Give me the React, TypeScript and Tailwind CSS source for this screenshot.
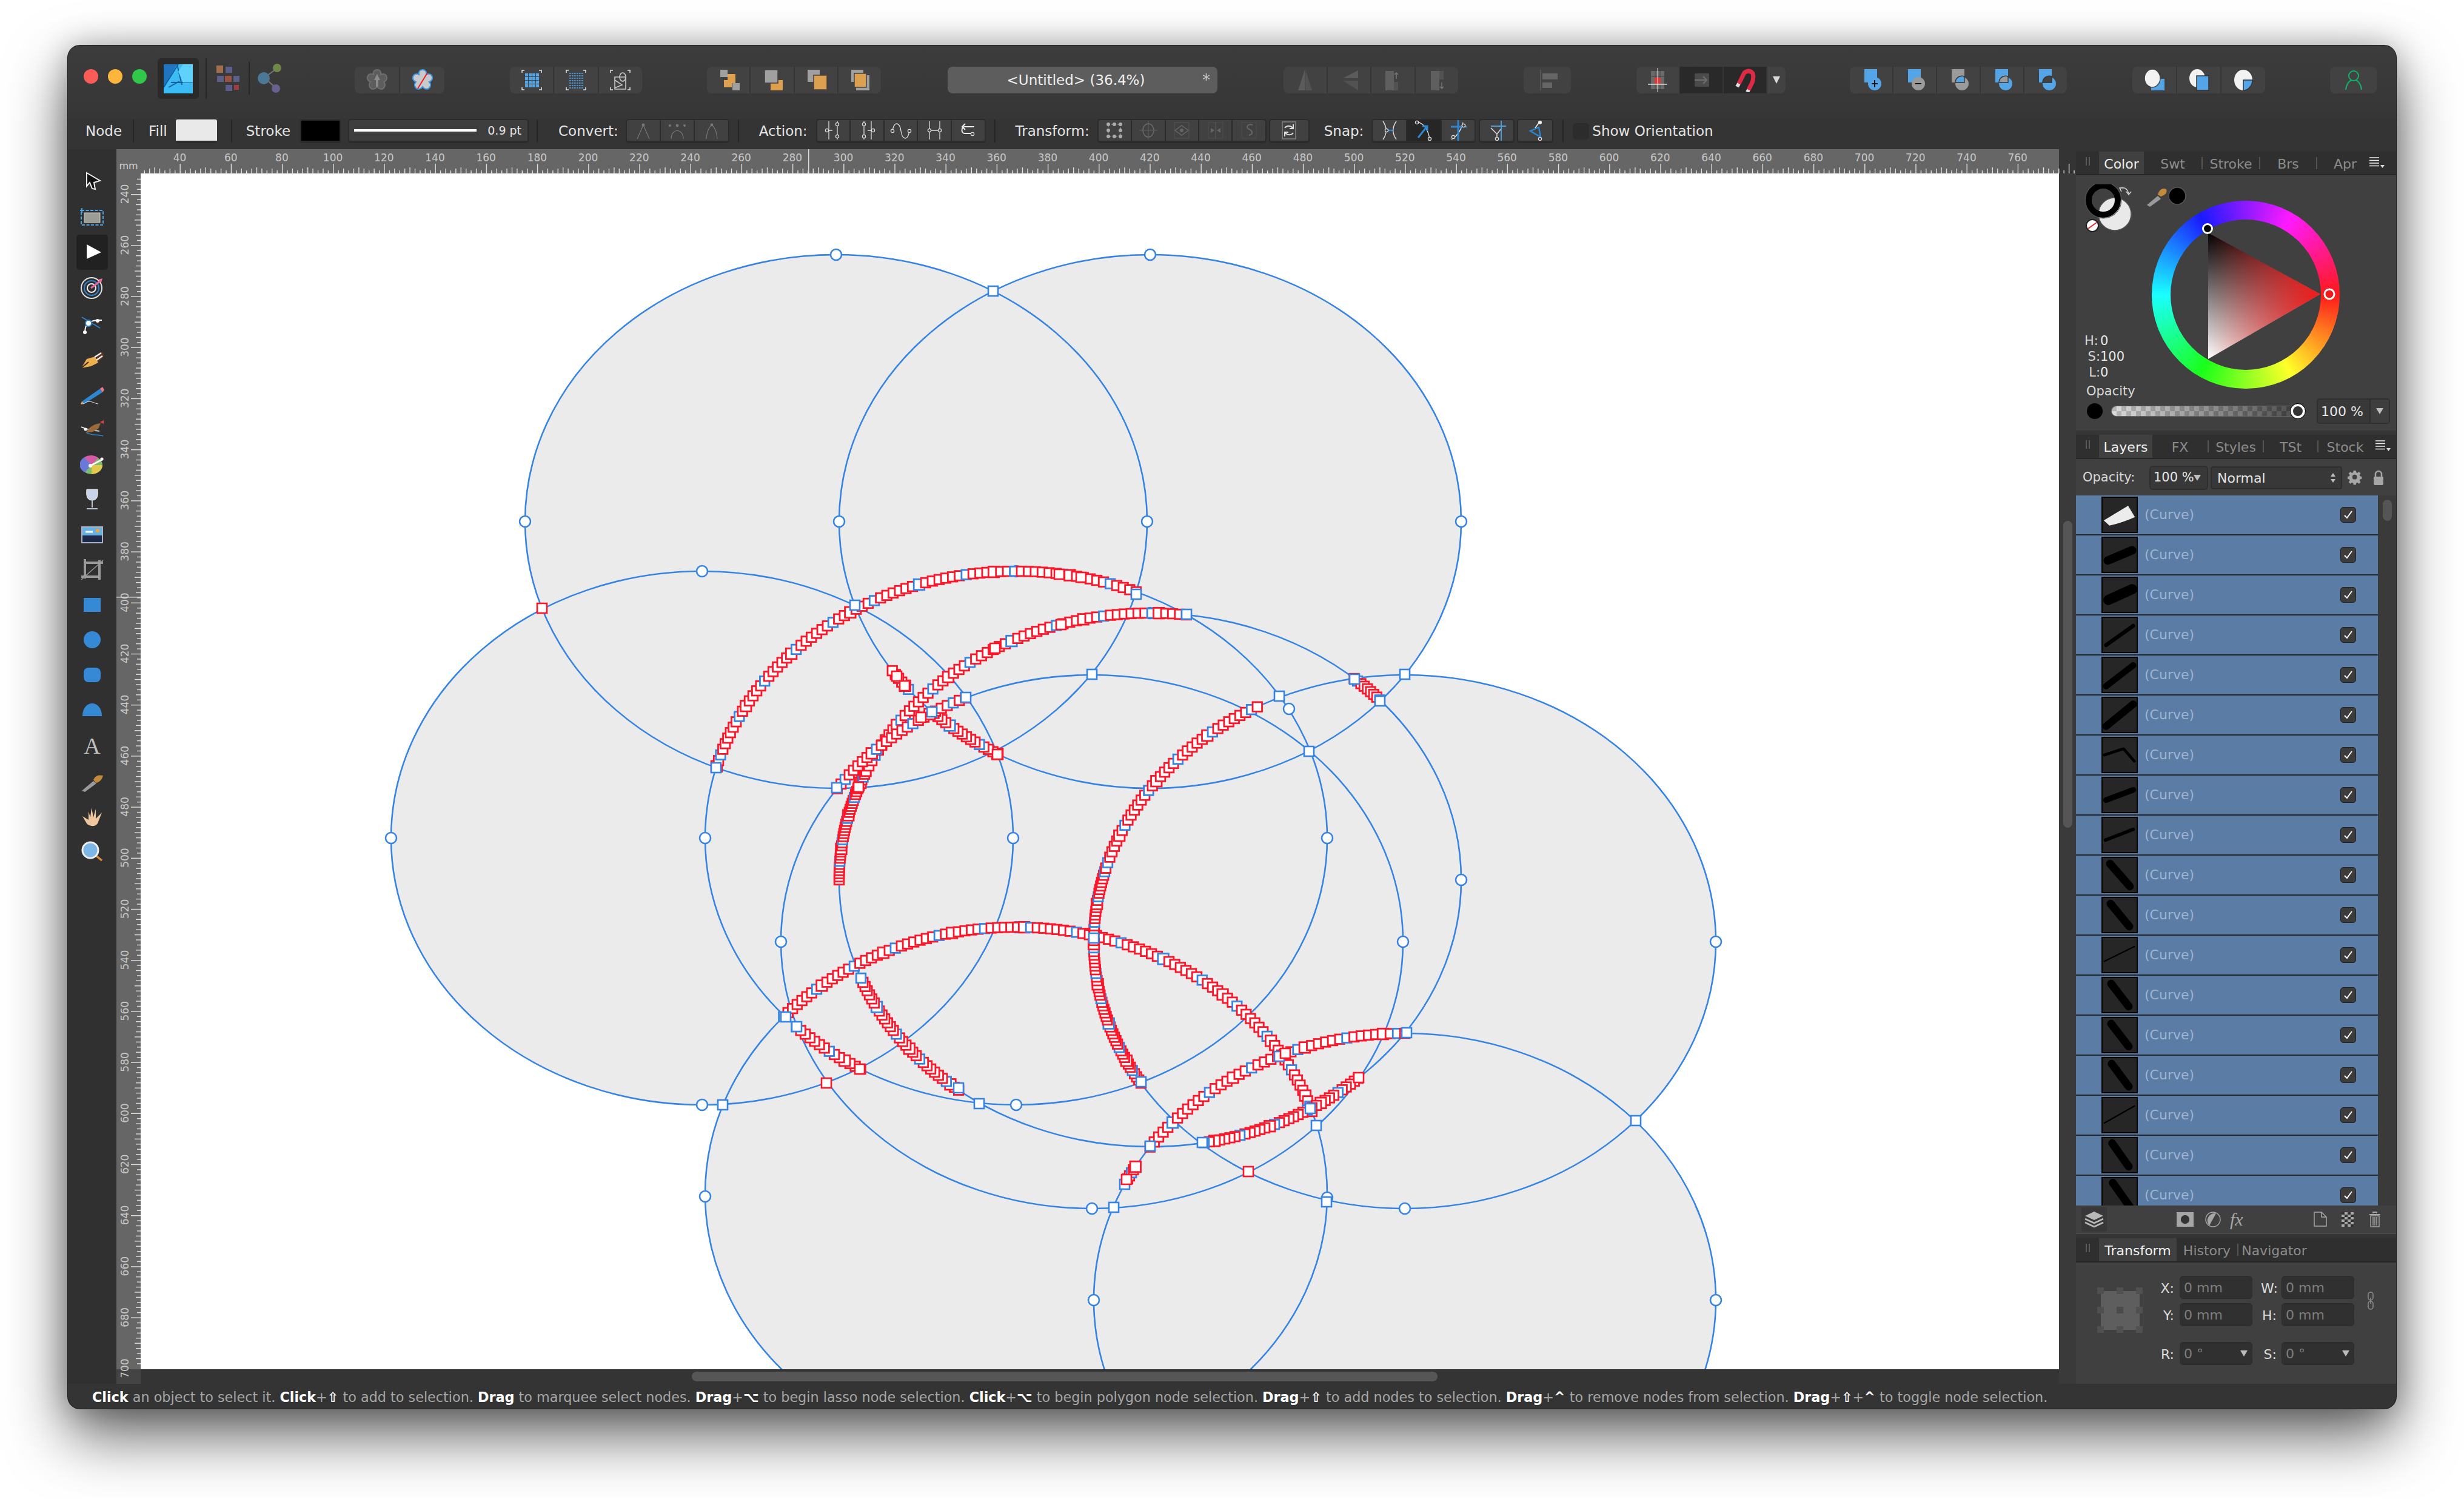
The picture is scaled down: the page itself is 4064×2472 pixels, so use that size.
import React from "react";

const FONT = "font-['DejaVu_Sans',sans-serif]";

/* ---------- canvas geometry (page px) ---------- */
const RX = 513;
const RY = 440;
const centers: Record<string, [number, number]> = {
  A: [1379, 860],
  B: [1897, 860],
  C: [1158, 1382],
  D: [1676, 1382],
  E: [1801, 1553],
  F: [2317, 1553],
  G: [1897, 1451],
  H: [1676, 1969],
  I: [2317, 2144],
};

type Chain = [string, number, number, number];
const chains: Chain[] = [
  ["D", 195.6, 292.7, 10.5],
  ["G", 180, 204, 5.5],
  ["G", 204, 276.7, 10.5],
  ["H", 221.6, 342, 10],
  ["F", 148, 196, 6.5],
  ["F", 196, 241.7, 10],
  ["I", 215, 270, 11],
  ["I", 207, 210, 7],
  ["D", 120, 135, 9.5],
  ["G", 128, 158.4, 8],
  ["B", 141, 146, 9],
  ["B", 119.4, 134, 8],
  ["G", 311, 317.6, 7],
  ["G", 48, 80, 8],
  ["E", 215, 246, 10],
];

const chainSquares = chains.flatMap(([c, t0, t1, step], ci) => {
  const [cx, cy] = centers[c];
  const n = Math.round(((t1 - t0) * 8.2) / step);
  return Array.from({ length: n + 1 }, (_, i) => {
    const t = ((t0 + ((t1 - t0) * i) / Math.max(n, 1)) * Math.PI) / 180;
    return {
      key: `${ci}-${i}`,
      x: cx + RX * Math.cos(t),
      y: cy + RY * Math.sin(t),
      blue: (i * 5 + ci) % 7 === 3,
      big: (i + ci) % 11 === 0,
    };
  });
});

const blueNodes: [number, number][] = [
  [1410, 998], [1181, 1266], [1380, 1299], [1593, 1150], [1537, 1174], [1638, 480], [1874, 980], [1957, 1013],
  [2110, 1148], [2159, 1239], [2234, 1120], [2276, 1156], [2317, 1112], [1801, 1112], [1296, 1677], [1314, 1693],
  [1192, 1822], [1581, 1794], [1615, 1820], [1804, 1547], [2110, 1742], [2161, 1828], [2171, 1856], [1882, 1784],
  [1897, 1890], [1983, 1884], [2188, 1982], [1837, 1991], [1855, 1953], [2698, 1848], [2320, 1703],
];
const redNodes: [number, number][] = [
  [1416, 1298], [1519, 1183], [1645, 1244], [1479, 1115], [1492, 1131], [1641, 1069], [1750, 1030], [1747, 947],
  [1783, 952], [894, 1003], [1418, 1763], [1363, 1786], [2120, 1737], [2241, 1777], [2059, 1932], [1858, 1945],
];
const circleNodes: [number, number][] = [
  [1379, 420], [1897, 420], [866, 860], [1384, 860], [1892, 860], [2410, 860],
  [1158, 942], [1676, 942], [645, 1382], [1163, 1382], [1671, 1382], [2189, 1382], [1158, 1822], [1676, 1822],
  [1288, 1553], [2314, 1553], [2830, 1553], [1801, 1993], [2317, 1993], [1897, 1011], [1676, 1529],
  [2126, 1169], [2410, 1451], [1163, 1973], [2189, 1975], [1804, 2144], [2830, 2144],
];

const Canvas = () => (
  <svg viewBox="232 286 3164 1972" className="block w-[3164px] h-[1972px] bg-white">
    {Object.values(centers).map(([cx, cy], i) => (
      <ellipse key={i} cx={cx} cy={cy} rx={RX} ry={RY} fill="#ebebeb" />
    ))}
    {Object.values(centers).map(([cx, cy], i) => (
      <ellipse key={i} cx={cx} cy={cy} rx={RX} ry={RY} fill="none" stroke="#3584e4" strokeWidth="2.6" />
    ))}
    {circleNodes.map(([x, y], i) => (
      <ellipse key={i} cx={x} cy={y} rx={9} ry={9} fill="#fff" stroke="#3584e4" strokeWidth="2.6" />
    ))}
    {chainSquares.map((s) => {
      const d = s.big ? 17.5 : 15.5;
      return (
        <rect
          key={s.key}
          x={s.x - d / 2}
          y={s.y - d / 2}
          width={d}
          height={d}
          fill="#fff"
          stroke={s.blue ? "#3584e4" : "#ff1428"}
          strokeWidth="2.8"
        />
      );
    })}
    {blueNodes.map(([x, y], i) => (
      <rect key={i} x={x - 8} y={y - 8} width={16} height={16} fill="#fff" stroke="#3584e4" strokeWidth="2.6" />
    ))}
    {redNodes.map(([x, y], i) => (
      <rect key={i} x={x - 8} y={y - 8} width={16} height={16} fill="#fff" stroke="#ff1428" strokeWidth="2.6" />
    ))}
  </svg>
);

/* ---------- rulers ---------- */
const RulerTop = () => {
  const ticks = Array.from({ length: 385 }, (_, i) => i * 2 + 20);
  const labels = Array.from({ length: 37 }, (_, i) => 40 + i * 20);
  return (
    <svg viewBox="232 246 3192 40" className="block w-[3192px] h-[40px]">
      <rect x="232" y="246" width="3164" height="40" fill="#666" />
      {ticks.map((v) => {
        const x = 296.5 + (v - 40) * 4.21;
        if (x < 236 || x > 3424) return null;
        const h = v % 20 === 0 ? 16 : v % 10 === 0 ? 10 : v % 4 === 0 ? 8 : 5;
        return <rect key={v} x={x} y={286 - h} width="1.4" height={h} fill="#ddd" />;
      })}
      {labels.map((v) => (
        <text key={v} x={296.5 + (v - 40) * 4.21} y="266" fontSize="17" fill="#c8c8c8" textAnchor="middle" fontFamily="DejaVu Sans">
          {v}
        </text>
      ))}
      <rect x="1333" y="246" width="1.5" height="40" fill="#ddd" />
    </svg>
  );
};

const RulerLeft = () => {
  const ticks = Array.from({ length: 240 }, (_, i) => i * 2 + 220);
  const labels = Array.from({ length: 24 }, (_, i) => 240 + i * 20);
  return (
    <svg viewBox="192 286 40 1996" className="block w-[40px] h-[1996px]">
      <rect x="192" y="286" width="40" height="1972" fill="#666" />
      <rect x="192" y="2258" width="40" height="24" fill="#444" />
      {ticks.map((v) => {
        const y = 320 + (v - 240) * 4.21;
        if (y < 288 || y > 2282) return null;
        const w = v % 20 === 0 ? 16 : v % 10 === 0 ? 10 : v % 4 === 0 ? 8 : 6;
        return <rect key={v} x={232 - w} y={y} width={w} height="1.4" fill="#ddd" />;
      })}
      {labels.map((v) => {
        const y = 320 + (v - 240) * 4.21;
        return (
          <text key={v} x="206" y={y} fontSize="17" fill="#c8c8c8" textAnchor="middle" fontFamily="DejaVu Sans" transform={`rotate(-90 206 ${y}) translate(0 6)`}>
            {v}
          </text>
        );
      })}
      <rect x="192" y="984" width="40" height="1.5" fill="#ddd" />
    </svg>
  );
};

/* ---------- small helpers ---------- */
const Ico = ({ children, w = 40, h = 40 }: { children: React.ReactNode; w?: number; h?: number }) => (
  <svg width={w} height={h} viewBox={`0 0 ${w} ${h}`} className="block shrink-0">
    {children}
  </svg>
);

const Group = ({ className, items, cellClass }: { className: string; items: React.ReactNode[]; cellClass?: (i: number) => string }) => (
  <div className={`flex h-[44px] shrink-0 overflow-hidden rounded-[8px] bg-[#424242] ${className}`}>
    {items.map((it, i) => (
      <div key={i} className={`flex min-w-0 flex-1 items-center justify-center ${i > 0 ? "border-l-2 border-[#353535]" : ""} ${cellClass ? cellClass(i) : ""}`}>
        {it}
      </div>
    ))}
  </div>
);

const Well = ({ className, items, cellClass }: { className: string; items: React.ReactNode[]; cellClass?: (i: number) => string }) => (
  <div className={`flex h-[40px] shrink-0 overflow-hidden rounded-[5px] border-2 border-b-4 border-[#2b2b2b] bg-[#414141] ${className}`}>
    {items.map((it, i) => (
      <div key={i} className={`flex min-w-0 flex-1 items-center justify-center ${i > 0 ? "border-l-2 border-[#2b2b2b]" : ""} ${cellClass ? cellClass(i) : ""}`}>
        {it}
      </div>
    ))}
  </div>
);

const Sep = ({ className = "" }: { className?: string }) => <div className={`h-[38px] w-[2px] shrink-0 bg-[#262626] ${className}`} />;
const Label = ({ children, className = "" }: { children: React.ReactNode; className?: string }) => (
  <span className={`shrink-0 text-[23px] leading-none whitespace-nowrap text-[#e4e4e4] ${className}`}>{children}</span>
);

const Flower = ({ fill, stroke }: { fill: string; stroke: string }) => (
  <g fill={fill} stroke={stroke} strokeWidth="2">
    <path d="M20 3c5 0 7 4 6 8 4-2 9-1 10 4 1 4-2 7-5 8 3 3 3 8-1 11-4 2-8 0-10-3-2 3-6 5-10 3-4-3-4-8-1-11-3-1-6-4-5-8 1-5 6-6 10-4-1-4 1-8 6-8z" />
  </g>
);

/* node-type glyphs in the context bar */
const N = ({ x, y }: { x: number; y: number }) => <circle cx={x} cy={y} r="2.6" fill="#3c3c3c" stroke="#ddd" strokeWidth="1.3" />;

/* ---------- title toolbar ---------- */
const TopBar = () => (
  <div className="flex h-[121px] shrink-0 items-start bg-[linear-gradient(#3c3c3c,#363636)] pt-[35px] pl-[26px]">
    <div className="mt-[4px] flex gap-[16px]">
      <div className="h-[24px] w-[24px] rounded-full bg-[#fc5c57]" />
      <div className="h-[24px] w-[24px] rounded-full bg-[#fdb63b]" />
      <div className="h-[24px] w-[24px] rounded-full bg-[#31c748]" />
    </div>
    <div className="mt-[-14px] ml-[18px] flex h-[67px] w-[68px] shrink-0 items-center justify-center rounded-[6px] bg-[#2a2a2a]">
      <svg width="48" height="48" viewBox="0 0 48 48" className="block">
        <rect width="48" height="48" fill="#3bbcf4" />
        <path d="M0 0h22L0 38z" fill="#1f75c0" />
        <path d="M0 38L24 0M22 0l8 34M12 30h36M8 38l18-10" stroke="#135f9c" strokeWidth="2" fill="none" />
        <path d="M24 12l8-12h16v30H32z" fill="#5ed2fb" />
      </svg>
    </div>
    <div className="mt-[-14px] ml-[11px] h-[67px] w-[2px] bg-[#262626]" />
    <div className="mt-[-2px] ml-[16px]">
      <Ico w={40} h={46}>
        <rect x="0" y="0" width="11" height="12" fill="#a06e4e" />
        <rect x="15" y="2" width="11" height="10" fill="#5b5f8a" />
        <rect x="1" y="17" width="11" height="10" fill="#5b5f8a" />
        <rect x="14" y="17" width="11" height="10" fill="#9c5242" />
        <rect x="28" y="17" width="10" height="10" fill="#5b5f8a" />
        <rect x="15" y="32" width="11" height="10" fill="#5b5f8a" />
        <rect x="29" y="32" width="8" height="8" fill="#9c3f44" />
      </Ico>
    </div>
    <div className="mt-[-8px] ml-[13px] h-[54px] w-[2px] bg-[#262626]" />
    <div className="mt-[-6px] ml-[12px]">
      <Ico w={42} h={50}>
        <path d="M12 24L34 8M12 24L32 42" stroke="#777" strokeWidth="2" />
        <circle cx="11" cy="25" r="10" fill="#4c7896" />
        <circle cx="33" cy="8" r="7" fill="#6f8848" />
        <circle cx="31" cy="42" r="7" fill="#68608f" />
      </Ico>
    </div>

    <Group
      className="ml-[119px] w-[148px]"
      items={[
        <Ico key="a">
          <Flower fill="#5d5d5d" stroke="#6e6e6e" />
          <path d="M20 10l5 10h-3v11h-4V20h-3z" fill="#8c8c8c" />
        </Ico>,
        <Ico key="b">
          <Flower fill="#c9c9c9" stroke="#3d97e2" />
          <path d="M12 34L28 8" stroke="#e5262c" strokeWidth="2" />
        </Ico>,
      ]}
    />
    <Group
      className="ml-[108px] w-[218px]"
      items={[
        <Ico key="a">
          <path d="M4 8V4h4M32 4h4v4M36 32v4h-4M8 36H4v-4" stroke="#ddd" strokeWidth="1.6" fill="none" />
          {[10, 16, 22, 28].map((y) => [11, 17, 23, 29].map((x) => <rect key={`${x}${y}`} x={x - 2} y={y - 1} width="5" height="5" fill="#54a5e5" />))}
        </Ico>,
        <Ico key="b">
          <path d="M4 8V4h4M32 4h4v4M36 32v4h-4M8 36H4v-4" stroke="#ddd" strokeWidth="1.6" fill="none" />
          {[8, 12, 16, 20, 24, 28, 32].map((y) => [9, 13, 17, 21, 25, 29].map((x) => <rect key={`${x}${y}`} x={x} y={y} width="2.6" height="2" fill="#4a93cf" />))}
        </Ico>,
        <Ico key="c">
          <path d="M4 8V4h4M32 4h4v4M36 32v4h-4M8 36H4v-4" stroke="#ddd" strokeWidth="1.6" fill="none" />
          <path d="M11 15h18v20H11zM11 20l12 8-12 5M24 8a5 7 0 1 0 .1 0" stroke="#c8c8c8" strokeWidth="1.6" fill="none" />
        </Ico>,
      ]}
    />
    <Group
      className="ml-[107px] w-[287px]"
      items={[
        <Ico key="a">
          <rect x="7" y="3" width="12" height="12" fill="#a0a0a0" />
          <rect x="19" y="10" width="13" height="15" fill="#dca04f" />
          <rect x="13" y="20" width="13" height="12" fill="#dca04f" />
          <rect x="27" y="25" width="12" height="12" fill="#a0a0a0" />
        </Ico>,
        <Ico key="b">
          <path d="M18 20h20v17H18z" fill="#dca04f" />
          <rect x="8" y="3" width="22" height="22" fill="#a0a0a0" stroke="#424242" strokeWidth="1.5" />
        </Ico>,
        <Ico key="c">
          <rect x="6" y="3" width="20" height="20" fill="#a0a0a0" />
          <rect x="16" y="12" width="22" height="24" fill="#dca04f" stroke="#424242" strokeWidth="1.5" />
        </Ico>,
        <Ico key="d">
          <rect x="6" y="3" width="20" height="20" fill="#a0a0a0" />
          <rect x="14" y="27" width="22" height="10" fill="#a0a0a0" />
          <rect x="30" y="12" width="6" height="24" fill="#a0a0a0" />
          <rect x="11" y="9" width="20" height="23" fill="#dca04f" stroke="#424242" strokeWidth="1.5" />
        </Ico>,
      ]}
    />
    <div className="relative ml-[110px] flex h-[44px] w-[445px] shrink-0 items-center justify-center rounded-[8px] bg-[#5d5d5d] pr-[22px] text-[23px] text-[#f0f0f0]">
      &lt;Untitled&gt; (36.4%)
      <span className="absolute right-[12px] text-[26px] leading-none text-[#c8c8c8]">*</span>
    </div>
    <Group
      className="ml-[109px] w-[288px]"
      items={[
        <Ico key="a">
          <path d="M20 3L9 37h11z" fill="#5b5b5b" />
          <path d="M21 3l11 34H21z" fill="#525252" />
        </Ico>,
        <Ico key="b">
          <path d="M35 4L10 17h25z" fill="#5b5b5b" />
          <path d="M35 37L10 21h25z" fill="#525252" />
        </Ico>,
        <Ico key="c">
          <rect x="8" y="5" width="14" height="32" fill="#5f5f5f" />
          <rect x="22" y="23" width="7" height="14" fill="#525252" />
          <path d="M26 18V8m-3 3l3-3 3 3" stroke="#777" strokeWidth="1.5" fill="none" />
        </Ico>,
        <Ico key="d">
          <rect x="10" y="5" width="14" height="32" fill="#5f5f5f" />
          <rect x="24" y="5" width="7" height="14" fill="#525252" />
          <path d="M28 24v10m-3-3l3 3 3-3" stroke="#777" strokeWidth="1.5" fill="none" />
        </Ico>,
      ]}
    />
    <Group
      className="ml-[108px] w-[78px]"
      items={[
        <Ico key="a">
          <rect x="8" y="3" width="1.5" height="34" fill="#5a5a5a" />
          <rect x="12" y="9" width="25" height="10" fill="#666" />
          <rect x="12" y="24" width="16" height="9" fill="#666" />
        </Ico>,
      ]}
    />
    <Group
      className="ml-[108px] w-[246px]"
      cellClass={(i) => (i === 1 || i === 2 ? "bg-[#292929]" : i === 3 ? "max-w-[32px]" : "")}
      items={[
        <Ico key="a">
          <rect x="9" y="5" width="22" height="30" fill="#6a6a6a" />
          <path d="M16 5v30M24 5v30M9 14h22" stroke="#424242" strokeWidth="1" />
          <rect x="15" y="16" width="10" height="10" fill="#e2383a" />
          <path d="M20 0v44" stroke="#ddd" strokeWidth="1" />
          <path d="M4 27h32" stroke="#ddd" strokeWidth="1.5" />
        </Ico>,
        <Ico key="b">
          <rect x="9" y="9" width="24" height="22" fill="#4a4a4a" />
          <path d="M9 20h19m-5-6l6 6-6 6" stroke="#6c6c6c" strokeWidth="2.4" fill="none" />
        </Ico>,
        <Ico key="c">
          <path d="M10 26L19 8q8-6 14 1 2 7-1 15l-6 12" stroke="#dd2a45" strokeWidth="7" fill="none" />
          <path d="M10 26l-3 5M26 36l-2 4" stroke="#ddd" strokeWidth="6" />
        </Ico>,
        <svg key="d" width="14" height="14" viewBox="0 0 14 14" className="block">
          <path d="M1 1h12L7 13z" fill="#d8d8d8" />
        </svg>,
      ]}
    />
    <Group
      className="ml-[106px] w-[358px]"
      items={[
        <Ico key="a">
          <rect x="9" y="2" width="21" height="22" fill="#53a5e8" />
          <circle cx="26" cy="26" r="11" fill="#53a5e8" />
          <path d="M26 20v12M21 26h10" stroke="#111" strokeWidth="2" />
        </Ico>,
        <Ico key="b">
          <rect x="9" y="2" width="21" height="22" fill="#53a5e8" />
          <circle cx="26" cy="26" r="11" fill="#9a9a9a" />
          <path d="M21 26h10" stroke="#111" strokeWidth="2" />
        </Ico>,
        <Ico key="c">
          <rect x="9" y="2" width="21" height="22" fill="#9a9a9a" />
          <circle cx="26" cy="26" r="11" fill="#9a9a9a" />
          <path d="M15 24a11 11 0 0 1 15-10v10z" fill="#53a5e8" stroke="#333" strokeWidth="1.4" />
        </Ico>,
        <Ico key="d">
          <rect x="9" y="2" width="21" height="22" fill="#53a5e8" />
          <circle cx="26" cy="26" r="11" fill="#53a5e8" />
          <path d="M15 24a11 11 0 0 1 15-10v10z" fill="#9a9a9a" stroke="#333" strokeWidth="1.4" />
        </Ico>,
        <Ico key="e">
          <rect x="9" y="2" width="21" height="22" fill="#53a5e8" />
          <circle cx="26" cy="26" r="11" fill="#53a5e8" />
          <path d="M15 24a11 11 0 0 1 15-10v10z" fill="#424242" stroke="#333" strokeWidth="1.4" />
        </Ico>,
      ]}
    />
    <Group
      className="ml-[108px] w-[219px]"
      items={[
        <Ico key="a">
          <rect x="15" y="18" width="22" height="19" fill="#53a5e8" />
          <ellipse cx="17" cy="17" rx="13" ry="15" fill="#f2f2f2" stroke="#424242" strokeWidth="1.5" />
        </Ico>,
        <Ico key="b">
          <ellipse cx="17" cy="17" rx="13" ry="15" fill="#f2f2f2" />
          <rect x="16" y="13" width="20" height="24" fill="#53a5e8" stroke="#333" strokeWidth="1.5" />
        </Ico>,
        <Ico key="c">
          <ellipse cx="20" cy="20" rx="15" ry="17" fill="#f2f2f2" />
          <path d="M20 20h15a15 17 0 0 1-15 17z" fill="#53a5e8" stroke="#333" strokeWidth="1.5" />
        </Ico>,
      ]}
    />
    <Group
      className="ml-[107px] w-[77px]"
      items={[
        <Ico key="a">
          <circle cx="20" cy="13" r="8" fill="none" stroke="#11b26b" strokeWidth="2" />
          <path d="M7 36c1-10 6-15 10-16M33 36c-1-10-6-15-10-16" fill="none" stroke="#11b26b" strokeWidth="2" />
        </Ico>,
      ]}
    />
  </div>
);

/* ---------- context toolbar ---------- */
const ContextBar = () => (
  <div className="flex h-[50px] shrink-0 items-start pl-[29px]">
    <div className="flex h-[40px] items-center">
      <Label>Node</Label>
      <Sep className="ml-[18px]" />
      <Label className="ml-[24px]">Fill</Label>
      <div className="ml-[14px] h-[39px] w-[68px] rounded-[3px] border-b-4 border-[#2b2b2b] bg-[#e9e9e9]" />
      <Sep className="ml-[23px]" />
      <Label className="ml-[23px]">Stroke</Label>
      <div className="ml-[16px] h-[39px] w-[67px] rounded-[3px] border-2 border-b-4 border-[#2b2b2b] bg-black" />
      <div className="ml-[12px] flex h-[40px] w-[298px] items-center rounded-[5px] border-2 border-b-4 border-[#2b2b2b] bg-[#3e3e3e] pr-[10px] pl-[8px]">
        <div className="h-[4px] w-[203px] bg-white" />
        <span className="ml-[18px] text-[19px] whitespace-nowrap text-[#e4e4e4]">0.9 pt</span>
      </div>
      <Sep className="ml-[13px]" />
      <Label className="ml-[34px]">Convert:</Label>
      <Well
        className="ml-[12px] w-[171px]"
        items={[
          <Ico key="a" w={36} h={36}>
            <path d="M18 9L8 32M18 9l10 23" stroke="#777" strokeWidth="1.2" fill="none" />
            <circle cx="18" cy="9" r="2.4" fill="#777" />
          </Ico>,
          <Ico key="b" w={36} h={36}>
            <path d="M8 32C8 14 28 14 28 32" stroke="#777" strokeWidth="1.2" fill="none" />
            <circle cx="18" cy="10" r="2.4" fill="#777" />
            <circle cx="6" cy="10" r="2" fill="#777" />
            <circle cx="30" cy="10" r="2" fill="#777" />
          </Ico>,
          <Ico key="c" w={36} h={36}>
            <path d="M9 32c1-14 6-21 9-23 3 2 8 9 9 23" stroke="#777" strokeWidth="1.2" fill="none" />
            <circle cx="18" cy="9" r="2.4" fill="#777" />
          </Ico>,
        ]}
      />
      <Sep className="ml-[14px]" />
      <Label className="ml-[33px]">Action:</Label>
      <Well
        className="ml-[14px] w-[280px]"
        items={[
          <Ico key="a" w={36} h={36}>
            <path d="M11 3v30M25 3v30M11 18h6" stroke="#ddd" strokeWidth="1.3" />
            <N x={8} y={18} />
            <N x={25} y={8} />
            <N x={25} y={28} />
          </Ico>,
          <Ico key="b" w={36} h={36}>
            <path d="M13 3v30M25 3v30M19 18h6" stroke="#ddd" strokeWidth="1.3" />
            <N x={28} y={18} />
            <N x={13} y={8} />
            <N x={13} y={28} />
          </Ico>,
          <Ico key="c" w={36} h={36}>
            <path d="M4 19c3-18 12-14 14 0s11 18 14 0" stroke="#ddd" strokeWidth="1.3" fill="none" />
            <N x={4} y={19} />
            <N x={32} y={19} />
          </Ico>,
          <Ico key="d" w={36} h={36}>
            <path d="M10 3v30M27 3v30M10 18h17" stroke="#ddd" strokeWidth="1.3" />
            <N x={10} y={18} />
            <N x={27} y={18} />
          </Ico>,
          <Ico key="e" w={36} h={36}>
            <path d="M28 12H12c-6 0-6 11 0 11h11" stroke="#eee" strokeWidth="2" fill="none" />
            <path d="M13 7l-5 5 5 5" stroke="#eee" strokeWidth="2" fill="none" />
            <N x={25} y={24} />
          </Ico>,
        ]}
      />
      <Sep className="ml-[14px]" />
      <Label className="ml-[33px]">Transform:</Label>
      <Well
        className="ml-[13px] w-[279px]"
        items={[
          <Ico key="a" w={36} h={36}>
            <rect x="8" y="8" width="20" height="20" fill="none" stroke="#aaa" strokeWidth="1" strokeDasharray="3 2" />
            {[8, 18, 28].map((x) => [8, 28].map((y) => <circle key={`${x}${y}`} cx={x} cy={y} r="3" fill="#aaa" />))}
            <circle cx="8" cy="18" r="3" fill="#aaa" />
            <circle cx="28" cy="18" r="3" fill="#aaa" />
          </Ico>,
          <Ico key="b" w={36} h={36}>
            <ellipse cx="18" cy="18" rx="9" ry="11" fill="none" stroke="#6a6a6a" strokeWidth="1.5" />
            <path d="M18 3v30M3 18h30" stroke="#5f5f5f" strokeWidth="1" />
          </Ico>,
          <Ico key="c" w={36} h={36}>
            <path d="M18 10l11 8-11 8-11-8z" fill="none" stroke="#666" strokeWidth="1.5" />
            <circle cx="18" cy="18" r="3" fill="#666" />
            <rect x="6" y="5" width="24" height="26" fill="none" stroke="#555" strokeWidth="1" />
          </Ico>,
          <Ico key="d" w={36} h={36}>
            <path d="M18 4v28" stroke="#5f5f5f" strokeWidth="1" />
            <path d="M10 14l6 4-6 4zM26 14l-6 4 6 4z" fill="#666" />
            <rect x="6" y="5" width="24" height="26" fill="none" stroke="#4f4f4f" strokeWidth="1" />
          </Ico>,
          <Ico key="e" w={36} h={36}>
            <path d="M24 9c-8-3-12 4-6 7s8 8 0 10" fill="none" stroke="#666" strokeWidth="2" />
            <rect x="6" y="5" width="24" height="26" fill="none" stroke="#4f4f4f" strokeWidth="1" />
          </Ico>,
        ]}
      />
      <Well
        className="ml-[4px] w-[67px]"
        items={[
          <Ico key="a" w={36} h={36}>
            <rect x="7" y="4" width="22" height="28" fill="none" stroke="#888" strokeWidth="1.4" />
            <path d="M24 14a8 8 0 0 0-13 0M12 22a8 8 0 0 0 13 0" fill="none" stroke="#ddd" strokeWidth="2" />
            <path d="M25 8v7h-6M11 28v-7h6" fill="none" stroke="#ddd" strokeWidth="2" />
          </Ico>,
        ]}
      />
      <Label className="ml-[24px]">Snap:</Label>
      <Well
        className="ml-[13px] w-[172px]"
        cellClass={(i) => (i === 1 ? "bg-[#262626]" : "")}
        items={[
          <Ico key="a" w={36} h={36}>
            <path d="M7 3c7 10 7 20 0 30M29 3c-7 10-7 20 0 30" stroke="#ddd" strokeWidth="1.4" fill="none" />
            <path d="M13 18h10" stroke="#2f86d0" strokeWidth="2.5" />
            <N x={13} y={18} />
          </Ico>,
          <Ico key="b" w={36} h={36}>
            <path d="M7 4c12 2 19 14 21 29" stroke="#ddd" strokeWidth="1.4" fill="none" />
            <path d="M9 30L24 11m-8 0h8v8" stroke="#2f86d0" strokeWidth="3" fill="none" />
            <N x={7} y={5} />
            <N x={28} y={32} />
          </Ico>,
          <Ico key="c" w={36} h={36}>
            <path d="M7 33c10-6 16-16 19-28" stroke="#ddd" strokeWidth="1.4" fill="none" />
            <path d="M18 1v34M6 12h26" stroke="#2f86d0" strokeWidth="3" />
            <N x={27} y={10} />
            <N x={10} y={29} />
          </Ico>,
        ]}
      />
      <Well
        className="ml-[5px] w-[59px]"
        items={[
          <Ico key="a" w={36} h={36}>
            <path d="M8 14l10 10 0 10M18 24l8-10" stroke="#ddd" strokeWidth="1.5" fill="none" />
            <path d="M25 2v34M8 11h25" stroke="#4a9ee0" strokeWidth="2" />
            <N x={18} y={32} />
          </Ico>,
        ]}
      />
      <Well
        className="ml-[4px] w-[60px]"
        items={[
          <Ico key="a" w={36} h={36}>
            <path d="M10 19l14-6 3 16zM10 19l9-4" stroke="#2f86d0" strokeWidth="2.4" fill="none" />
            <path d="M18 14l8-11M26 30v5" stroke="#eee" strokeWidth="1.6" />
            <circle cx="26" cy="5" r="3" fill="#eee" />
            <N x={26} y={32} />
          </Ico>,
        ]}
      />
      <Sep className="ml-[15px]" />
      <div className="ml-[15px] h-[27px] w-[27px] rounded-[5px] bg-[#2c2c2c]" />
      <Label className="ml-[5px]">Show Orientation</Label>
    </div>
  </div>
);

/* ---------- tool column ---------- */
const Tools: React.ReactNode[] = [
  <path key="t" d="M11 5l22 13-10 3 2 11-5-1-4-10-5 6z" fill="#111" stroke="#eee" strokeWidth="2" />,
  <g key="t">
    <rect x="2" y="9" width="36" height="24" fill="none" stroke="#4ba3e6" strokeWidth="2" strokeDasharray="5 2.5" />
    <path d="M0 9h6M3 5v8" stroke="#4ba3e6" strokeWidth="2" />
    <rect x="7" y="13" width="26" height="16" fill="#9d9d98" stroke="#ccc" />
  </g>,
  <path key="t" d="M11 7l24 13-24 11z" fill="#fff" />,
  <g key="t" fill="none">
    <circle cx="19" cy="21" r="17" stroke="#ddd" strokeWidth="2" />
    <circle cx="19" cy="21" r="12" stroke="#2f86d0" strokeWidth="2" />
    <circle cx="19" cy="21" r="7" stroke="#eee" strokeWidth="2" />
    <path d="M18 21L34 9" stroke="#ea6aa0" strokeWidth="3" />
    <path d="M30 7l7-2-2 7z" fill="#ea6aa0" />
  </g>,
  <g key="t" fill="none">
    <path d="M3 11l30 18" stroke="#2f86d0" strokeWidth="1.6" />
    <path d="M8 36c0-16 10-21 28-20" stroke="#fff" strokeWidth="2" />
    <circle cx="14" cy="21" r="5" stroke="#2f86d0" strokeWidth="2" fill="#fff" />
    <circle cx="8" cy="36" r="3" fill="#fff" />
    <circle cx="29" cy="17" r="3" fill="#fff" />
  </g>,
  <g key="t">
    <path d="M2 36l9-15 14-4 5 10-12 6z" fill="#eeb04f" />
    <path d="M2 36l12-10" stroke="#3a2a10" strokeWidth="2" />
    <path d="M25 17l12-8 3 7-10 11z" fill="#5b3320" />
    <path d="M24 18l11-7M27 23l10-7" stroke="#eee" strokeWidth="2.5" />
  </g>,
  <g key="t">
    <path d="M3 33L33 12l4 6-30 19z" fill="#2f86d0" />
    <path d="M3 33l4 4-6 1z" fill="#e9b07a" />
    <path d="M33 12l4-3 3 5-3 4z" fill="#ea7a80" />
    <path d="M6 37c10-8 16-1 24 0" stroke="#eee" strokeWidth="1" fill="none" />
  </g>,
  <g key="t" fill="none">
    <path d="M2 17c8 4 20 6 30 7" stroke="#fff" strokeWidth="1.5" />
    <path d="M10 26c8 6 20 3 28 6" stroke="#2f86d0" strokeWidth="1.5" />
    <path d="M10 26c6-10 14-14 24-15l-4 9c-6 5-14 7-20 6z" fill="#9a6a3a" />
    <path d="M33 9l6-3v6z" fill="#e53b44" />
    <circle cx="9" cy="21" r="2.5" fill="#fff" />
  </g>,
  <g key="t">
    <ellipse cx="19" cy="22" rx="18" ry="15" fill="#7dbd6b" />
    <path d="M19 22L7 9A18 15 0 0 1 30 10z" fill="#d65aa6" />
    <path d="M19 22L7 9A18 15 0 0 0 8 34z" fill="#6a79d8" />
    <path d="M19 22l18 0A18 15 0 0 1 19 37z" fill="#e3c84d" />
    <path d="M19 22l17-9" stroke="#fff" strokeWidth="2.6" />
    <circle cx="17" cy="23" r="3" fill="#fff" />
    <circle cx="36" cy="12" r="2.6" fill="#fff" />
  </g>,
  <g key="t">
    <path d="M11 4h18c1 10 0 18-9 18s-10-8-9-18z" fill="#c9d3ea" stroke="#eee" />
    <path d="M20 22v12M11 36h18" stroke="#b9c2d0" strokeWidth="2" />
  </g>,
  <g key="t">
    <rect x="2" y="7" width="36" height="28" fill="#aab4c4" />
    <rect x="4" y="9" width="32" height="14" fill="#69b0e4" />
    <rect x="4" y="22" width="32" height="11" fill="#1d2a4a" />
    <path d="M9 16h12" stroke="#fff" strokeWidth="3" />
    <circle cx="29" cy="14" r="3" fill="#f0a83a" />
  </g>,
  <g key="t" fill="none" stroke="#9a9a9a">
    <path d="M8 3v32M2 32h28M32 5v32M10 9h28" strokeWidth="4" />
    <path d="M2 37L38 5" strokeWidth="1.5" />
  </g>,
  <rect key="t" x="6" y="9" width="28" height="23" fill="#3689d4" />,
  <ellipse key="t" cx="20" cy="20" rx="14" ry="14" fill="#3689d4" />,
  <rect key="t" x="6" y="8" width="28" height="24" rx="8" fill="#3689d4" />,
  <path key="t" d="M4 30c0-28 32-28 32 0z" fill="#3689d4" />,
  <text key="t" x="20" y="33" textAnchor="middle" fontSize="38" fontFamily="Liberation Serif" fill="#bdbdbd">
    A
  </text>,
  <g key="t">
    <path d="M3 36L22 20l5 4L8 38z" fill="#9a9a9a" />
    <path d="M22 18c4-8 10-8 16-7-2 8-8 12-12 12z" fill="#c48a3c" />
  </g>,
  <path key="t" d="M4 20l10 6 0-14 3 10 2-16 3 16 4-14 0 16 10-10-7 18c-4 6-14 5-18 0z" fill="#eec6a0" />,
  <g key="t">
    <path d="M25 26l11 9" stroke="#d88b3c" strokeWidth="3.5" />
    <circle cx="17" cy="18" r="13" fill="#7db7e8" stroke="#f0f0f0" strokeWidth="3" />
  </g>,
];

const ToolColumn = () => (
  <div className="flex w-[80px] shrink-0 flex-col items-center bg-[#303030] pt-[25px]">
    {Tools.map((t, i) => (
      <div key={i} className={`flex h-[58.1px] w-[52px] shrink-0 items-center justify-center ${i === 2 ? "rounded-[5px] bg-[#212121]" : ""}`}>
        <svg width="40" height="40" viewBox="0 0 40 40" className="block">
          {t}
        </svg>
      </div>
    ))}
  </div>
);

/* ---------- right panels ---------- */
const Tab = ({ active, children, w }: { active?: boolean; children: string; w?: string }) => (
  <div className={`flex h-full shrink-0 items-center justify-center pt-[3px] whitespace-nowrap ${w} ${active ? "bg-[#404040] text-[#efefef]" : "text-[#8c8c8c]"}`}>
    {children}
  </div>
);
const TabSep = () => <div className="h-[20px] w-[2px] shrink-0 bg-[#555]" />;
const Grip = () => (
  <div className="flex w-[38px] shrink-0 items-center justify-center gap-[3px] pb-[6px]">
    <div className="h-[14px] w-[2px] bg-[#5c5c5c]" />
    <div className="h-[14px] w-[2px] bg-[#5c5c5c]" />
  </div>
);
const MenuGlyph = () => (
  <svg width="28" height="22" viewBox="0 0 28 22" className="block shrink-0">
    <path d="M2 2h16M2 6.5h16M2 11h16M2 15.5h16" stroke="#eee" strokeWidth="1.6" />
    <path d="M20 14h7l-3.5 5z" fill="#ddd" />
  </svg>
);
const Caret = ({ className = "" }: { className?: string }) => (
  <svg width="12" height="10" viewBox="0 0 12 10" className={`block shrink-0 ${className}`}>
    <path d="M0 0h12L6 10z" fill="#bdbdbd" />
  </svg>
);

const ColorPanel = () => (
  <div className="h-[421px] shrink-0 bg-[#404040]">
    <div className="flex h-[342px]">
      <div className="flex w-[125px] shrink-0 flex-col pt-[15px] pl-[14px]">
        <svg width="82" height="80" viewBox="0 0 82 80" className="block">
          <circle cx="50" cy="49" r="27" fill="#e9e9e9" stroke="#555" strokeWidth="1.5" />
          <circle cx="31" cy="26" r="24" fill="none" stroke="#000" strokeWidth="10" />
          <circle cx="31" cy="26" r="30" fill="none" stroke="#555" strokeWidth="1" />
          <circle cx="13" cy="68" r="10" fill="#fff" stroke="#222" strokeWidth="2" />
          <path d="M6 73L20 63" stroke="#e5262c" strokeWidth="2" />
          <path d="M58 6c8-2 13 1 15 10m-7-10l-8 0 3 6M69 12l4 5 4-5" stroke="#cfcfcf" strokeWidth="1.5" fill="none" />
        </svg>
        <div className="mt-[165px] flex flex-col text-[21px] leading-[26px] text-[#d8d8d8]">
          <div className="flex">
            <span className="w-[26px] pr-[4px] text-right">H:</span>
            <span className="text-[#e8e8e8]">0</span>
          </div>
          <div className="flex">
            <span className="w-[26px] text-right">S:</span>
            <span className="text-[#e8e8e8]">100</span>
          </div>
          <div className="flex">
            <span className="w-[26px] text-right">L:</span>
            <span className="text-[#e8e8e8]">0</span>
          </div>
        </div>
      </div>
      <div className="relative mt-[42px] h-[310px] w-[310px] shrink-0">
        <div className="flex h-full w-full items-center justify-center rounded-full bg-[conic-gradient(from_90deg,#ff1a1a,#ffff2a,#1aff1a,#1affff,#1a1aff,#ff1aff,#ff1a1a)]">
          <div className="h-[248px] w-[248px] rounded-full bg-[#404040]" />
        </div>
        <svg viewBox="0 0 310 310" className="absolute inset-0 block h-[310px] w-[310px]">
          <defs>
            <linearGradient id="bw" x1="0" y1="0" x2="0" y2="1">
              <stop offset="0" stopColor="#000" />
              <stop offset="1" stopColor="#fff" />
            </linearGradient>
            <linearGradient id="hue" x1="0" y1="0" x2="1" y2="0">
              <stop offset="0" stopColor="#f01a1a" stopOpacity="0" />
              <stop offset="1" stopColor="#f01a1a" />
            </linearGradient>
          </defs>
          <path d="M93 53L278 154 93 261z" fill="url(#bw)" />
          <path d="M93 53L278 154 93 261z" fill="url(#hue)" />
          <circle cx="92" cy="46" r="7.5" fill="#000" stroke="#fff" strokeWidth="3" />
          <circle cx="293" cy="154" r="8" fill="#f01a1a" stroke="#fff" strokeWidth="3" />
        </svg>
      </div>
      <div className="ml-[-320px] flex h-[60px] items-start pt-[19px]">
        <svg width="70" height="36" viewBox="0 0 70 36" className="block shrink-0">
          <path d="M2 30l18-15 5 5L7 33z" fill="#9a9a9a" />
          <path d="M20 13c2-8 8-12 14-9 2 5-2 10-9 12z" fill="#c48a3c" />
          <circle cx="52" cy="15" r="14" fill="#000" stroke="#555" strokeWidth="1.5" />
        </svg>
      </div>
    </div>
    <div className="mt-[1px] pl-[17px] text-[21px] leading-[26px] text-[#d8d8d8]">Opacity</div>
    <div className="mt-[-1px] flex items-center pl-[18px]">
      <div className="h-[26px] w-[26px] shrink-0 rounded-full bg-black" />
      <div className="relative ml-[14px] h-[18px] w-[318px] shrink-0 rounded-full border border-[#6a6a6a] bg-[repeating-conic-gradient(#a8a8a8_0_25%,#4a4a4a_0_50%)] bg-[length:16px_16px]">
        <div className="h-full w-full rounded-full bg-[linear-gradient(90deg,rgba(255,255,255,0.6),rgba(48,48,48,0.8))]" />
        <div className="absolute top-[-4px] right-[-3px] h-[24px] w-[24px] rounded-full border-[4px] border-white bg-[#333] outline-1 outline-black" />
      </div>
      <div className="ml-[21px] flex h-[42px] w-[121px] shrink-0 items-center rounded-[5px] border-2 border-[#2f2f2f] bg-[#383838] pl-[5px] text-[22px] whitespace-nowrap text-[#e8e8e8]">
        <span className="w-[80px]">100 %</span>
        <div className="flex h-full flex-1 items-center justify-center border-l-2 border-[#2f2f2f] bg-[#3e3e3e]">
          <Caret />
        </div>
      </div>
    </div>
  </div>
);

const Band = ({ d, w }: { d: string; w: number }) => (
  <path d={d} stroke="#000" strokeWidth={w} strokeLinecap="round" strokeLinejoin="round" fill="none" />
);

const shapes: React.ReactNode[] = [
  <path key="s" d="M2 40L45 14 57 34Q35 44 12 49z" fill="#ececec" />,
  <Band key="s" d="M9 40L52 22" w={15} />,
  <Band key="s" d="M10 39L52 20" w={18} />,
  <Band key="s" d="M6 48L54 14" w={7} />,
  <Band key="s" d="M6 50L54 13" w={11} />,
  <Band key="s" d="M6 50L54 11" w={13} />,
  <Band key="s" d="M3 30L37 19 56 41" w={5} />,
  <Band key="s" d="M6 39L54 21" w={10} />,
  <Band key="s" d="M5 39L54 20" w={6} />,
  <Band key="s" d="M13 10L48 50" w={14} />,
  <Band key="s" d="M14 10L47 50" w={14} />,
  <Band key="s" d="M3 41L56 15" w={2.6} />,
  <Band key="s" d="M15 10L46 50" w={14} />,
  <Band key="s" d="M15 10L46 50" w={14} />,
  <Band key="s" d="M16 10L46 50" w={14} />,
  <Band key="s" d="M3 44L56 14" w={2.6} />,
  <Band key="s" d="M17 9L46 50" w={14} />,
  <Band key="s" d="M18 8L52 56" w={14} />,
];

const LayerRow = ({ shape }: { shape: React.ReactNode }) => (
  <div className="flex h-[64px] shrink-0 items-center bg-[#5b7ca5]">
    <svg width="60" height="60" viewBox="0 0 60 60" className="ml-[42px] block shrink-0 border-2 border-black bg-[#262626]">
      {shape}
    </svg>
    <span className="ml-[11px] text-[22px] leading-none text-[#9db5d4]">(Curve)</span>
    <div className="ml-[241px] flex h-[26px] w-[26px] shrink-0 items-center justify-center rounded-[5px] border border-[#222] bg-[#3c3c3c]">
      <svg width="16" height="14" viewBox="0 0 16 14" className="block">
        <path d="M2 8l4 4 8-11" stroke="#fff" strokeWidth="2" fill="none" />
      </svg>
    </div>
  </div>
);

const LayersPanel = () => (
  <div className="flex min-h-0 flex-col">
    <div className="flex h-[60px] shrink-0 items-center bg-[#404040] pt-[2px] text-[21px]">
      <span className="ml-[11px] w-[110px] shrink-0 text-[#d8d8d8]">Opacity:</span>
      <div className="flex h-[40px] w-[97px] shrink-0 items-center rounded-[6px] border-2 border-[#2e2e2e] bg-[#383838] pl-[5px] whitespace-nowrap text-[#e4e4e4]">
        <span className="w-[66px] overflow-hidden">100 %</span>
        <Caret />
      </div>
      <div className="ml-[4px] flex h-[38px] w-[217px] shrink-0 items-center justify-between rounded-[4px] border-2 border-[#2e2e2e] bg-[#383838] pr-[8px] pl-[9px] text-[22px] text-[#e4e4e4]">
        Normal
        <svg width="10" height="20" viewBox="0 0 10 20" className="block">
          <path d="M1 8l4-6 4 6zM1 12l4 6 4-6z" fill="#bbb" />
        </svg>
      </div>
      <svg width="26" height="26" viewBox="0 0 24 24" className="ml-[8px] block shrink-0" fill="#a6a6a6">
        <path d="M10 1h4l.6 3.2 2 .8 2.7-1.9 2.8 2.8-1.9 2.7.8 2 3 .6v4l-3 .6-.8 2 1.9 2.7-2.8 2.8-2.7-1.9-2 .8-.6 3h-4l-.6-3-2-.8-2.7 1.9-2.8-2.8 1.9-2.7-.8-2-3-.6v-4l3-.6.8-2-1.9-2.7 2.8-2.8 2.7 1.9 2-.8zM12 8a4 4 0 1 0 0 8 4 4 0 0 0 0-8z" transform="scale(.9) translate(1 0)" />
      </svg>
      <svg width="18" height="26" viewBox="0 0 18 26" className="ml-[17px] block shrink-0">
        <path d="M4 12V7a5 5 0 0 1 10 0v5" stroke="#a6a6a6" strokeWidth="2.5" fill="none" />
        <rect x="1" y="11" width="16" height="14" rx="2" fill="#a6a6a6" />
      </svg>
    </div>
    <div className="flex h-[1171px] shrink-0 overflow-hidden">
      <div className="flex w-[498px] shrink-0 flex-col gap-[2px] overflow-hidden bg-[#262626]">
        {shapes.map((s, i) => (
          <LayerRow key={i} shape={s} />
        ))}
      </div>
      <div className="flex flex-1 justify-center bg-[#3a3a3a] pt-[7px]">
        <div className="h-[35px] w-[15px] rounded-full bg-[#555]" />
      </div>
    </div>
    <div className="flex h-[47px] shrink-0 items-center border-b-2 border-[#4a4a4a] bg-[#404040] pl-[9px]">
      <div className="flex h-[40px] w-[42px] shrink-0 items-center justify-center bg-[#383838]">
        <svg width="34" height="28" viewBox="0 0 34 28" className="block">
          <path d="M17 1l15 7-15 7L2 8z" fill="#b8b8b8" />
          <path d="M2 13l15 7 15-7M2 19l15 7 15-7" stroke="#b8b8b8" strokeWidth="2.6" fill="none" />
        </svg>
      </div>
      <svg width="28" height="24" viewBox="0 0 28 24" className="ml-[115px] block shrink-0">
        <path d="M0 0h28v24H0zM14 5a7 7 0 1 0 0 14 7 7 0 0 0 0-14z" fill="#a6a6a6" fillRule="evenodd" />
        <circle cx="14" cy="12" r="7" fill="#333" />
      </svg>
      <svg width="26" height="26" viewBox="0 0 26 26" className="ml-[19px] block shrink-0">
        <circle cx="13" cy="13" r="12" fill="#404040" stroke="#a6a6a6" strokeWidth="1.5" />
        <path d="M18 3L7 23A12 12 0 0 1 18 3z" fill="#a6a6a6" />
      </svg>
      <span className="ml-[15px] font-['Liberation_Serif',serif] text-[30px] leading-none text-[#a6a6a6] italic">fx</span>
      <svg width="22" height="25" viewBox="0 0 22 25" className="ml-[116px] block shrink-0">
        <path d="M1 1h12l8 8v15H1zM13 1v8h8" fill="none" stroke="#a6a6a6" strokeWidth="1.5" />
      </svg>
      <svg width="20" height="24" viewBox="0 0 20 24" className="ml-[24px] block shrink-0">
        <rect width="20" height="24" fill="#a6a6a6" />
        {[0, 1, 2, 3, 4, 5].map((r) => [0, 1, 2, 3].map((c) => ((r + c) % 2 === 0 ? <rect key={`${r}${c}`} x={c * 5} y={r * 4} width="5" height="4" fill="#333" /> : null)))}
      </svg>
      <svg width="18" height="26" viewBox="0 0 18 26" className="ml-[26px] block shrink-0">
        <path d="M0 5h18M6 3V1h6v2" stroke="#a6a6a6" strokeWidth="2" fill="none" />
        <path d="M2 7h14v18H2zM6 9v14M9 9v14M12 9v14" stroke="#a6a6a6" strokeWidth="1.4" fill="none" />
      </svg>
    </div>
  </div>
);

const Field = ({ children, caret }: { children: string; caret?: boolean }) => (
  <div className="flex h-[38px] w-[120px] shrink-0 items-center justify-between rounded-[6px] border border-[#2a2a2a] bg-[#303030] pr-[7px] pl-[6px] text-[22px] text-[#7e7e7e]">
    {children}
    {caret && <Caret />}
  </div>
);
const FieldLabel = ({ children, className = "" }: { children: string; className?: string }) => (
  <span className={`w-[26px] shrink-0 pt-[3px] text-right text-[22px] leading-none text-[#dcdcdc] ${className}`}>{children}</span>
);

const TransformPanel = () => (
  <div className="flex h-[200px] shrink-0 bg-[#404040]">
    <div className="mt-[41px] ml-[35px] shrink-0">
      <svg width="76" height="76" viewBox="0 0 76 76" className="block">
        <rect x="6" y="6" width="64" height="64" fill="#5e5e5e" />
        {[0, 32, 64].map((x) => [0, 32, 64].map((y) => <rect key={`${x}${y}`} x={x} y={y} width="11" height="11" fill={x === 32 && y === 32 ? "#4b4b4b" : "#505050"} />))}
      </svg>
    </div>
    <div className="ml-[25px] flex flex-col pt-[22px]">
      <div className="flex items-center">
        <FieldLabel>X:</FieldLabel>
        <div className="ml-[9px]"><Field>0 mm</Field></div>
        <FieldLabel className="ml-[14px]">W:</FieldLabel>
        <div className="ml-[8px]"><Field>0 mm</Field></div>
      </div>
      <div className="mt-[7px] flex items-center">
        <FieldLabel>Y:</FieldLabel>
        <div className="ml-[9px]"><Field>0 mm</Field></div>
        <FieldLabel className="ml-[14px]">H:</FieldLabel>
        <div className="ml-[8px]"><Field>0 mm</Field></div>
      </div>
      <div className="mt-[26px] flex items-center">
        <FieldLabel>R:</FieldLabel>
        <div className="ml-[9px]"><Field caret>0 °</Field></div>
        <FieldLabel className="ml-[14px]">S:</FieldLabel>
        <div className="ml-[8px]"><Field caret>0 °</Field></div>
      </div>
    </div>
    <div className="mt-[48px] ml-[22px] shrink-0">
      <svg width="10" height="30" viewBox="0 0 10 30" className="block">
        <rect x="1" y="1" width="8" height="13" rx="4" fill="none" stroke="#8a8a8a" strokeWidth="1.6" />
        <rect x="1" y="16" width="8" height="13" rx="4" fill="none" stroke="#8a8a8a" strokeWidth="1.6" />
        <path d="M5 10v10" stroke="#8a8a8a" strokeWidth="1.6" />
      </svg>
    </div>
  </div>
);

const RightPanel = () => (
  <div className="flex w-[528px] shrink-0 flex-col bg-[#343434] text-[22px]">
    <div className="flex h-[43px] shrink-0 items-end bg-[#343434]">
      <div className="flex h-[39px] w-full items-center border-b-2 border-[#272727] bg-[#2f2f2f]">
        <Grip />
        <Tab active w="w-[74px]">Color</Tab>
        <Tab w="w-[95px]">Swt</Tab>
        <TabSep />
        <Tab w="w-[93px]">Stroke</Tab>
        <TabSep />
        <Tab w="w-[92px]">Brs</Tab>
        <TabSep />
        <Tab w="w-[92px]">Apr</Tab>
        <div className="ml-[-8px]"><MenuGlyph /></div>
      </div>
    </div>
    <ColorPanel />
    <div className="h-[7px] shrink-0 bg-[#363636]" />
    <div className="flex h-[40px] shrink-0 items-center border-b-2 border-[#272727] bg-[#2f2f2f]">
      <Grip />
      <Tab active w="w-[88px]">Layers</Tab>
      <Tab w="w-[91px]">FX</Tab>
      <TabSep />
      <Tab w="w-[89px]">Styles</Tab>
      <TabSep />
      <Tab w="w-[88px]">TSt</Tab>
      <TabSep />
      <Tab w="w-[88px]">Stock</Tab>
      <div className="ml-[4px]"><MenuGlyph /></div>
    </div>
    <LayersPanel />
    <div className="h-[7px] shrink-0 bg-[#343434]" />
    <div className="flex h-[40px] shrink-0 items-center border-b-2 border-[#272727] bg-[#2f2f2f]">
      <Grip />
      <Tab active w="w-[128px]">Transform</Tab>
      <Tab w="w-[100px]">History</Tab>
      <TabSep />
      <Tab w="w-[118px]">Navigator</Tab>
    </div>
    <TransformPanel />
  </div>
);

const B = ({ children }: { children: React.ReactNode }) => <b className="font-bold text-white">{children}</b>;

const App = () => (
  <div className={`h-[2472px] w-[4064px] overflow-hidden bg-white pt-[75px] pl-[112px] ${FONT}`}>
    <div className="flex h-[2248px] w-[3840px] flex-col overflow-hidden rounded-[20px] bg-[#343434] shadow-[0_0_0_1px_#1a1a1a,0_44px_100px_rgba(0,0,0,0.62),0_0_50px_rgba(0,0,0,0.25)]">
      <TopBar />
      <ContextBar />
      <div className="flex min-h-0 flex-1">
        <ToolColumn />
        <div className="flex w-[3232px] shrink-0 flex-col bg-[#343434]">
          <div className="flex h-[40px] shrink-0">
            <div className="flex h-[40px] w-[40px] shrink-0 items-end justify-center bg-[#666] pb-[4px] text-[16px] leading-none text-[#cfcfcf]">mm</div>
            <RulerTop />
          </div>
          <div className="flex min-h-0 flex-1">
            <RulerLeft />
            <div className="flex min-w-0 flex-1">
              <div className="flex w-[3164px] shrink-0 flex-col">
                <Canvas />
                <div className="flex h-[24px] shrink-0 items-center pl-[909px]">
                  <div className="h-[16px] w-[1230px] rounded-full bg-[#565656]" />
                </div>
              </div>
              <div className="flex w-[28px] shrink-0 justify-center bg-[#3a3a3a] pt-[573px]">
                <div className="h-[506px] w-[15px] rounded-full bg-[#565656]" />
              </div>
            </div>
          </div>
        </div>
        <RightPanel />
      </div>
      <div className="flex h-[41px] shrink-0 items-start pl-[40px] text-[22.3px] leading-[44px] whitespace-nowrap text-[#a6a6a6]">
        <div>
          <B>Click</B> an object to select it. <B>Click</B>+<B>⇧</B> to add to selection. <B>Drag</B> to marquee select nodes. <B>Drag</B>+<B>⌥</B> to begin lasso node selection. <B>Click</B>+<B>⌥</B> to begin polygon node selection. <B>Drag</B>+<B>⇧</B> to add nodes to selection. <B>Drag</B>+<B>^</B> to remove nodes from selection. <B>Drag</B>+<B>⇧</B>+<B>^</B> to toggle node selection.
        </div>
      </div>
    </div>
  </div>
);

export default App;
